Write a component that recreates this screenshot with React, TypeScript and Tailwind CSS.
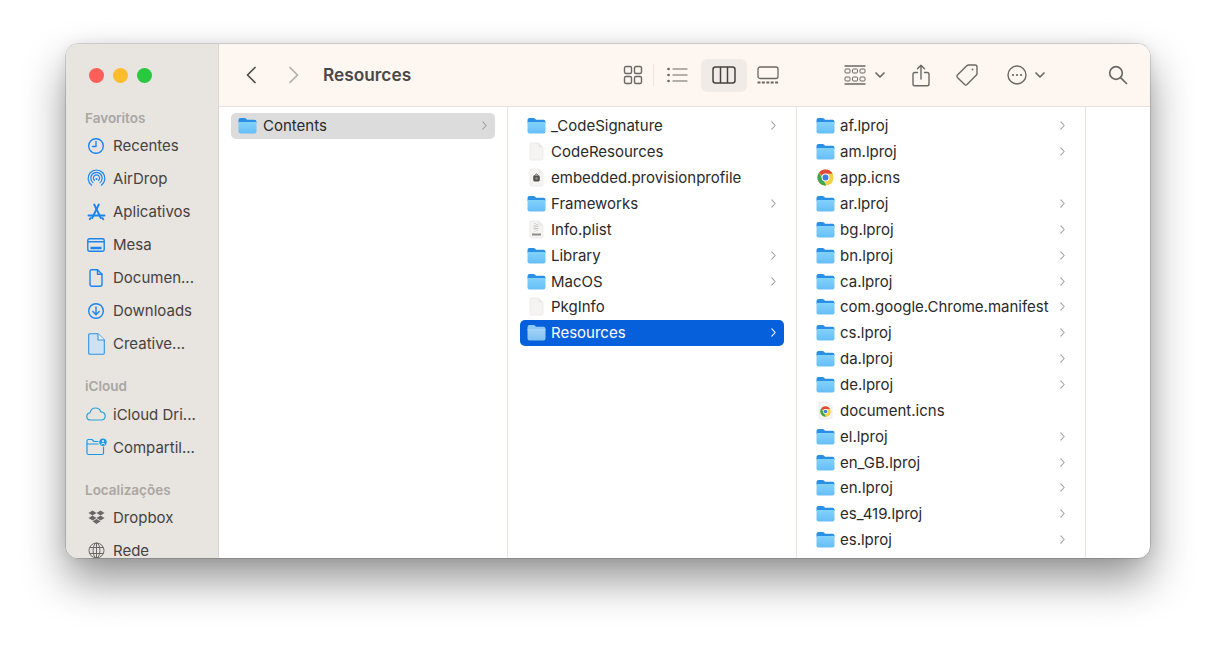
import { useId } from 'react';

const stroke = '#6b6966';
const blue = '#1a84f2';

function Folder({ selected = false }: { selected?: boolean }) {
  const id = useId();
  return (
    <svg width="19" height="17" viewBox="0 0 19 17" className="shrink-0">
      <defs>
        <linearGradient id={id} x1="0" y1="0" x2="0" y2="1">
          <stop offset="0" stopColor={selected ? '#a5d4f8' : '#82d2fb'} />
          <stop offset="1" stopColor={selected ? '#7fc0f2' : '#66bef6'} />
        </linearGradient>
      </defs>
      <path d="M0.5 3 Q0.5 1 2.5 1 H6.5 Q7.6 1 8.2 1.8 L9 2.8 H16.5 Q18.5 2.8 18.5 4.8 V6 H0.5 Z" fill={selected ? '#8cc8f5' : '#2a90e6'} />
      <path d="M0.5 5 H18.5 V14.5 Q18.5 16.5 16.5 16.5 H2.5 Q0.5 16.5 0.5 14.5 Z" fill={`url(#${id})`} />
    </svg>
  );
}

function Doc({ children }: { children?: React.ReactNode }) {
  return (
    <svg width="19" height="19" viewBox="0 0 19 19" className="shrink-0">
      <path d="M3.5 1 H11.5 L16 5.5 V16.5 Q16 18 14.5 18 H4.5 Q3 18 3 16.5 V1.5 Z" fill="#f5f4f3" stroke="#ebe9e7" strokeWidth="0.8" />
      <path d="M11.5 1 V5.5 H16 Z" fill="#e9e7e5" />
      {children}
    </svg>
  );
}

function Provision() {
  return (
    <Doc>
      <rect x="6.2" y="7.4" width="6.6" height="6" rx="1.4" fill="#55524f" />
      <path d="M7.6 7.8 Q9.5 4.4 11.4 7.8" fill="none" stroke="#55524f" strokeWidth="1" />
      <circle cx="9.5" cy="10.4" r="1.3" fill="#8b8885" />
    </Doc>
  );
}

function Plist() {
  return (
    <Doc>
      <path d="M8 3 V11.5 M10 4 V11.5 M6.5 6 H11.5 M6.5 8.5 H11.5" stroke="#a3a09d" strokeWidth="0.7" fill="none" strokeDasharray="1 1" />
      <rect x="5" y="13.5" width="9" height="2" fill="#8e8b88" />
    </Doc>
  );
}

function Chrome({ size = 17 }: { size?: number }) {
  return (
    <svg width={size} height={size} viewBox="0 0 20 20" className="shrink-0">
      <circle cx="10" cy="10" r="9.5" fill="#f7d046" />
      <path d="M10 0.5 A9.5 9.5 0 0 1 18.4 5.6 L10 5.6 A4.5 4.5 0 0 0 5.9 8.2 L2.4 4.3 A9.5 9.5 0 0 1 10 0.5 Z" fill="#e2483c" />
      <path d="M2.4 4.3 L6.6 11.8 L10.9 19.4 A9.5 9.5 0 0 1 2.4 4.3 Z" fill="#3ca655" />
      <circle cx="10" cy="10" r="4.6" fill="#fff" />
      <circle cx="10" cy="10" r="3.5" fill="#3b7fe8" />
    </svg>
  );
}

function ChromeDoc() {
  return (
    <svg width="19" height="19" viewBox="0 0 19 19" className="shrink-0">
      <path d="M3.5 1 H11.5 L16 5.5 V16.5 Q16 18 14.5 18 H4.5 Q3 18 3 16.5 V1.5 Z" fill="#f5f4f3" stroke="#ebe9e7" strokeWidth="0.8" />
      <g transform="translate(4 5) scale(0.55)">
        <circle cx="10" cy="10" r="9.5" fill="#f7d046" />
        <path d="M10 0.5 A9.5 9.5 0 0 1 18.4 5.6 L10 5.6 A4.5 4.5 0 0 0 5.9 8.2 L2.4 4.3 A9.5 9.5 0 0 1 10 0.5 Z" fill="#e2483c" />
        <path d="M2.4 4.3 L6.6 11.8 L10.9 19.4 A9.5 9.5 0 0 1 2.4 4.3 Z" fill="#3ca655" />
        <circle cx="10" cy="10" r="4.4" fill="#fff" />
        <circle cx="10" cy="10" r="3.3" fill="#3b7fe8" />
      </g>
    </svg>
  );
}

type Item = { name: string; kind: 'folder' | 'doc' | 'prov' | 'plist' | 'app' | 'chromedoc'; more?: boolean };

const col2: Item[] = [
  { name: '_CodeSignature', kind: 'folder', more: true },
  { name: 'CodeResources', kind: 'doc' },
  { name: 'embedded.provisionprofile', kind: 'prov' },
  { name: 'Frameworks', kind: 'folder', more: true },
  { name: 'Info.plist', kind: 'plist' },
  { name: 'Library', kind: 'folder', more: true },
  { name: 'MacOS', kind: 'folder', more: true },
  { name: 'PkgInfo', kind: 'doc' },
  { name: 'Resources', kind: 'folder', more: true },
];

const col3: Item[] = [
  { name: 'af.lproj', kind: 'folder', more: true },
  { name: 'am.lproj', kind: 'folder', more: true },
  { name: 'app.icns', kind: 'app' },
  { name: 'ar.lproj', kind: 'folder', more: true },
  { name: 'bg.lproj', kind: 'folder', more: true },
  { name: 'bn.lproj', kind: 'folder', more: true },
  { name: 'ca.lproj', kind: 'folder', more: true },
  { name: 'com.google.Chrome.manifest', kind: 'folder', more: true },
  { name: 'cs.lproj', kind: 'folder', more: true },
  { name: 'da.lproj', kind: 'folder', more: true },
  { name: 'de.lproj', kind: 'folder', more: true },
  { name: 'document.icns', kind: 'chromedoc' },
  { name: 'el.lproj', kind: 'folder', more: true },
  { name: 'en_GB.lproj', kind: 'folder', more: true },
  { name: 'en.lproj', kind: 'folder', more: true },
  { name: 'es_419.lproj', kind: 'folder', more: true },
  { name: 'es.lproj', kind: 'folder', more: true },
];

function RowIcon({ kind, selected }: { kind: Item['kind']; selected?: boolean }) {
  if (kind === 'folder') return <Folder selected={selected} />;
  if (kind === 'prov') return <Provision />;
  if (kind === 'plist') return <Plist />;
  if (kind === 'app') return <Chrome />;
  if (kind === 'chromedoc') return <ChromeDoc />;
  return <Doc />;
}

function Chevron({ color }: { color: string }) {
  return (
    <svg width="5" height="9" viewBox="0 0 5 9" fill="none" className="shrink-0">
      <path d="M0.8 0.8 L4.2 4.5 L0.8 8.2" stroke={color} strokeWidth="1.1" strokeLinecap="round" strokeLinejoin="round" />
    </svg>
  );
}

function Row({ item, state }: { item: Item; state?: 'active' | 'gray' }) {
  const bg = state === 'active' ? 'bg-[#0660dc] text-white' : state === 'gray' ? 'bg-[#dcdcdc] text-[#2a2a2a]' : 'text-[#2a2a2a]';
  return (
    <div className={`mx-3 flex h-[25.87px] items-center rounded-[5px] pl-[7px] pr-[8px] ${bg}`}>
      <div className="flex w-[19px] shrink-0 justify-center">
        <RowIcon kind={item.kind} selected={state === 'active'} />
      </div>
      <span className={`flex-1 whitespace-nowrap text-[15px] leading-none ${state === 'gray' ? 'ml-[6px]' : 'ml-[5px]'}`}>{item.name}</span>
      {item.more && <Chevron color={state === 'active' ? '#ffffff' : '#a3a19f'} />}
    </div>
  );
}

function SideRow({ icon, label }: { icon: React.ReactNode; label: string }) {
  return (
    <div className="flex h-[33px] items-center">
      <div className="flex w-[30px] shrink-0 justify-center">{icon}</div>
      <span className="ml-[2px] whitespace-nowrap text-[15px] leading-none text-[#45423f]">{label}</span>
    </div>
  );
}

function SideLabel({ text, className }: { text: string; className: string }) {
  return <div className={`pl-[4px] text-[13.5px] font-semibold leading-none text-[#a9a6a3] ${className}`}>{text}</div>;
}

const line = { fill: 'none', stroke: blue, strokeWidth: 1.4, strokeLinecap: 'round', strokeLinejoin: 'round' } as const;

const sideIcons = {
  recent: (
    <svg width="18" height="18" viewBox="0 0 18 18" {...line}>
      <circle cx="9" cy="9" r="7.3" />
      <path d="M9 4.5 V9.5 H5.5" />
    </svg>
  ),
  airdrop: (
    <svg width="19" height="19" viewBox="0 0 19 19" {...line} strokeWidth={1.2}>
      <path d="M4.6 16.2 A8.4 8.4 0 1 1 14.4 16.2" />
      <path d="M6 13.6 A5.7 5.7 0 1 1 13 13.6" />
      <path d="M7.4 11.3 A3.1 3.1 0 1 1 11.6 11.3" />
      <path d="M9.5 10 L9.5 10.1" strokeWidth={2} />
    </svg>
  ),
  apps: (
    <svg width="19" height="18" viewBox="0 0 19 18" {...line} strokeWidth={1.9}>
      <path d="M7.2 1.5 L13.8 15" />
      <path d="M11.8 1.5 L5.2 15" />
      <path d="M1.5 12.5 H17.5" />
      <path d="M2.8 16.2 L3.8 15 M16.2 16.2 L15.2 15" />
    </svg>
  ),
  desk: (
    <svg width="18" height="14" viewBox="0 0 18 14" {...line}>
      <rect x="0.8" y="0.8" width="16.4" height="12.4" rx="1.6" />
      <path d="M0.8 3.8 H17.2" />
      <path d="M3.5 10 H14.5" strokeWidth={2.4} strokeLinecap="butt" />
    </svg>
  ),
  doc: (
    <svg width="14" height="18" viewBox="0 0 14 18" {...line}>
      <path d="M2.5 0.8 H8.5 L13 5.3 V15.2 Q13 17.2 11 17.2 H3 Q1 17.2 1 15.2 V2.3 Q1 0.8 2.5 0.8 Z" />
      <path d="M8.5 0.8 V5.3 H13" />
    </svg>
  ),
  download: (
    <svg width="18" height="18" viewBox="0 0 18 18" {...line}>
      <circle cx="9" cy="9" r="7.3" />
      <path d="M9 5 V12.5 M5.8 9.6 L9 12.7 L12.2 9.6" />
    </svg>
  ),
  creative: (
    <svg width="17" height="22" viewBox="0 0 17 22">
      <path d="M1.7 0.7 H10 L16.3 7 V20 Q16.3 21.3 15 21.3 H2 Q0.7 21.3 0.7 20 V1.7 Q0.7 0.7 1.7 0.7 Z" fill="#cfe2f3" stroke="#2f93e6" strokeWidth="1.1" />
      <path d="M10 0.7 V7 H16.3" fill="#eef5fb" stroke="#2f93e6" strokeWidth="1.1" />
    </svg>
  ),
  cloud: (
    <svg width="20" height="14" viewBox="0 0 20 14" fill="none" stroke="#2aa3d9" strokeWidth="1.2" strokeLinejoin="round">
      <path d="M5 13 Q0.8 13 0.8 9.4 Q0.8 6.2 4 5.8 Q5.2 1 9.6 1 Q13.6 1 14.8 4.8 Q19.2 5.2 19.2 9 Q19.2 13 15 13 Z" />
    </svg>
  ),
  shared: (
    <svg width="21" height="18" viewBox="0 0 21 18" {...line} stroke="#1a9ae6" strokeWidth={1.2}>
      <path d="M17.5 9 V15 Q17.5 16.5 16 16.5 H2.5 Q1 16.5 1 15 V3 Q1 1.5 2.5 1.5 H6 L8 3.5 H12" />
      <path d="M1 6 H12" />
      <circle cx="17" cy="4.2" r="3.7" fill="#1a9ae6" stroke="none" />
      <circle cx="17" cy="3.2" r="1.1" fill="#e8e4e0" stroke="none" />
      <path d="M15 6.2 Q17 4 19 6.2" stroke="#e8e4e0" strokeWidth={1} />
    </svg>
  ),
  dropbox: (
    <svg width="17" height="15" viewBox="0 0 17 15" fill="#6a6764">
      <path d="M4.5 0.5 L8.5 3 L4.5 5.5 L0.5 3 Z" />
      <path d="M12.5 0.5 L16.5 3 L12.5 5.5 L8.5 3 Z" />
      <path d="M4.5 5.5 L8.5 8 L4.5 10.5 L0.5 8 Z" />
      <path d="M12.5 5.5 L16.5 8 L12.5 10.5 L8.5 8 Z" />
      <path d="M4.5 11.3 L8.5 8.9 L12.5 11.3 L8.5 14 Z" />
    </svg>
  ),
  globe: (
    <svg width="17" height="17" viewBox="0 0 17 17" fill="none" stroke="#6a6764" strokeWidth="1">
      <circle cx="8.5" cy="8.5" r="7.5" />
      <ellipse cx="8.5" cy="8.5" rx="3.4" ry="7.5" />
      <path d="M1.6 5.5 H15.4 M1.6 11.5 H15.4 M8.5 1 V16" />
    </svg>
  ),
};

const tool = { fill: 'none', stroke: stroke, strokeWidth: 1.4, strokeLinecap: 'round', strokeLinejoin: 'round' } as const;

function SmallChevron() {
  return (
    <svg width="10" height="6" viewBox="0 0 10 6" fill="none" stroke={stroke} strokeWidth="1.7" strokeLinecap="round" strokeLinejoin="round">
      <path d="M1 1 L5 5 L9 1" />
    </svg>
  );
}

function Toolbar() {
  return (
    <div className="flex h-[63px] shrink-0 items-center border-b border-[#e7e1dc] bg-[#fdf6f1] pl-[26px] pr-[22px]">
      <svg width="12" height="18" viewBox="0 0 12 18" fill="none" stroke="#4e4c4a" strokeWidth="1.7" strokeLinecap="round" strokeLinejoin="round" className="shrink-0">
        <path d="M10 1.5 L2.5 9 L10 16.5" />
      </svg>
      <svg width="12" height="18" viewBox="0 0 12 18" fill="none" stroke="#b2afac" strokeWidth="1.7" strokeLinecap="round" strokeLinejoin="round" className="ml-[31px] shrink-0">
        <path d="M2 1.5 L9.5 9 L2 16.5" />
      </svg>
      <div className="ml-[23px] flex-1 whitespace-nowrap text-[17.3px] font-semibold leading-none text-[#4a4846]">Resources</div>

      <div className="flex shrink-0 items-center">
        <svg width="20" height="20" viewBox="0 0 20 20" {...tool}>
          <rect x="1.5" y="1.5" width="7" height="7" rx="1.5" />
          <rect x="11.5" y="1.5" width="7" height="7" rx="1.5" />
          <rect x="1.5" y="11.5" width="7" height="7" rx="1.5" />
          <rect x="11.5" y="11.5" width="7" height="7" rx="1.5" />
        </svg>
        <div className="ml-[10px] h-[22px] w-px bg-[#ebe5e0]" />
        <svg width="21" height="16" viewBox="0 0 21 16" {...tool} strokeWidth={1.2} className="ml-[13px]">
          <path d="M6 2 H20 M6 8 H20 M6 14 H20" />
          <path d="M1.5 2 H1.6 M1.5 8 H1.6 M1.5 14 H1.6" strokeWidth={2.6} />
        </svg>
        <div className="ml-[13px] flex h-[33px] w-[46px] items-center justify-center rounded-[6px] bg-[#f0ebe7]">
          <svg width="24" height="18" viewBox="0 0 24 18" fill="none" stroke="#45433f" strokeWidth="1.5">
            <rect x="1" y="1" width="22" height="16" rx="2.5" />
            <path d="M8.5 1 V17 M15.5 1 V17" />
          </svg>
        </div>
        <svg width="22" height="18" viewBox="0 0 22 18" fill="none" stroke={stroke} strokeWidth="1.3" className="ml-[10px]">
          <rect x="1" y="1" width="20" height="11.5" rx="2" />
          <path d="M0.5 16.5 H21.5" strokeWidth={2.2} strokeDasharray="3 1.4" />
        </svg>

        <svg width="22" height="20" viewBox="0 0 22 20" fill="none" stroke={stroke} strokeWidth="1" className="ml-[65px]">
          <path d="M0.5 1 H21.5 M0.5 19 H21.5" strokeWidth={1.4} />
          <rect x="1" y="4" width="5" height="4" rx="1" />
          <rect x="8.5" y="4" width="5" height="4" rx="1" />
          <rect x="16" y="4" width="5" height="4" rx="1" />
          <rect x="1" y="12" width="5" height="4" rx="1" />
          <rect x="8.5" y="12" width="5" height="4" rx="1" />
          <rect x="16" y="12" width="5" height="4" rx="1" />
        </svg>
        <div className="ml-[9px]"><SmallChevron /></div>

        <svg width="18" height="23" viewBox="0 0 18 23" {...tool} className="ml-[27px]">
          <path d="M5.5 8.5 H2.8 Q1 8.5 1 10.3 V20 Q1 21.8 2.8 21.8 H15.2 Q17 21.8 17 20 V10.3 Q17 8.5 15.2 8.5 H12.5" />
          <path d="M9 15 V1.5 M5.5 4.8 L9 1.3 L12.5 4.8" />
        </svg>

        <svg width="24" height="24" viewBox="0 0 24 24" {...tool} className="ml-[25px]">
          <path d="M13.5 2 H20 Q22 2 22 4 V10.5 Q22 11.4 21.2 12.2 L12 21.6 Q10.8 22.7 9.6 21.6 L2.4 14.4 Q1.3 13.2 2.4 12 L11.8 2.8 Q12.6 2 13.5 2 Z" />
          <circle cx="17.5" cy="6.5" r="0.9" fill={stroke} stroke="none" />
        </svg>

        <svg width="20" height="20" viewBox="0 0 20 20" {...tool} className="ml-[28px]">
          <circle cx="10" cy="10" r="9" />
          <path d="M6 10 H6.1 M10 10 H10.1 M14 10 H14.1" strokeWidth={2.2} />
        </svg>
        <div className="ml-[8px]"><SmallChevron /></div>

        <svg width="20" height="20" viewBox="0 0 20 20" {...tool} strokeWidth={1.7} className="ml-[63px]">
          <circle cx="8" cy="8" r="6.3" />
          <path d="M12.8 12.8 L18.5 18.5" />
        </svg>
      </div>
    </div>
  );
}

export default function App() {
  return (
    <div className="h-[645px] w-[1216px] overflow-hidden bg-white pl-[66px] pt-[44px] font-['Inter',sans-serif]">
      <div className="flex h-[514px] w-[1084px] overflow-hidden rounded-[12px] bg-white shadow-[0_0_0_0.5px_rgba(0,0,0,0.25),0_22px_44px_rgba(0,0,0,0.42),0_0_14px_rgba(0,0,0,0.08)]">
        <aside className="w-[153px] shrink-0 overflow-hidden border-r border-[#d9d5d1] bg-[#e8e4e0] pl-[15px]">
          <div className="flex gap-[9.5px] pl-[8px] pt-[24px]">
            <div className="h-[14.5px] w-[14.5px] rounded-full bg-[#fb5f57]" />
            <div className="h-[14.5px] w-[14.5px] rounded-full bg-[#fdbc2e]" />
            <div className="h-[14.5px] w-[14.5px] rounded-full bg-[#28c83f]" />
          </div>
          <SideLabel text="Favoritos" className="pt-[29px]" />
          <div className="mt-[4px]">
            <SideRow icon={sideIcons.recent} label="Recentes" />
            <SideRow icon={sideIcons.airdrop} label="AirDrop" />
            <SideRow icon={sideIcons.apps} label="Aplicativos" />
            <SideRow icon={sideIcons.desk} label="Mesa" />
            <SideRow icon={sideIcons.doc} label="Documen..." />
            <SideRow icon={sideIcons.download} label="Downloads" />
            <SideRow icon={sideIcons.creative} label="Creative..." />
          </div>
          <SideLabel text="iCloud" className="pt-[20px]" />
          <div className="mt-[4px]">
            <SideRow icon={sideIcons.cloud} label="iCloud Dri..." />
            <SideRow icon={sideIcons.shared} label="Compartil..." />
          </div>
          <SideLabel text="Localizações" className="pt-[20px]" />
          <div className="mt-[4px]">
            <SideRow icon={sideIcons.dropbox} label="Dropbox" />
            <SideRow icon={sideIcons.globe} label="Rede" />
          </div>
        </aside>

        <main className="flex min-w-0 flex-1 flex-col">
          <Toolbar />
          <div className="flex min-h-0 flex-1">
            <div className="w-[289px] shrink-0 border-r border-[#e9e4df] pt-[6px]">
              <Row item={{ name: 'Contents', kind: 'folder', more: true }} state="gray" />
            </div>
            <div className="w-[289px] shrink-0 border-r border-[#e9e4df] pt-[6px]">
              {col2.map((item) => (
                <Row key={item.name} item={item} state={item.name === 'Resources' ? 'active' : undefined} />
              ))}
            </div>
            <div className="w-[289px] shrink-0 overflow-hidden border-r border-[#e9e4df] pt-[6px]">
              {col3.map((item) => (
                <Row key={item.name} item={item} />
              ))}
            </div>
          </div>
        </main>
      </div>
    </div>
  );
}
